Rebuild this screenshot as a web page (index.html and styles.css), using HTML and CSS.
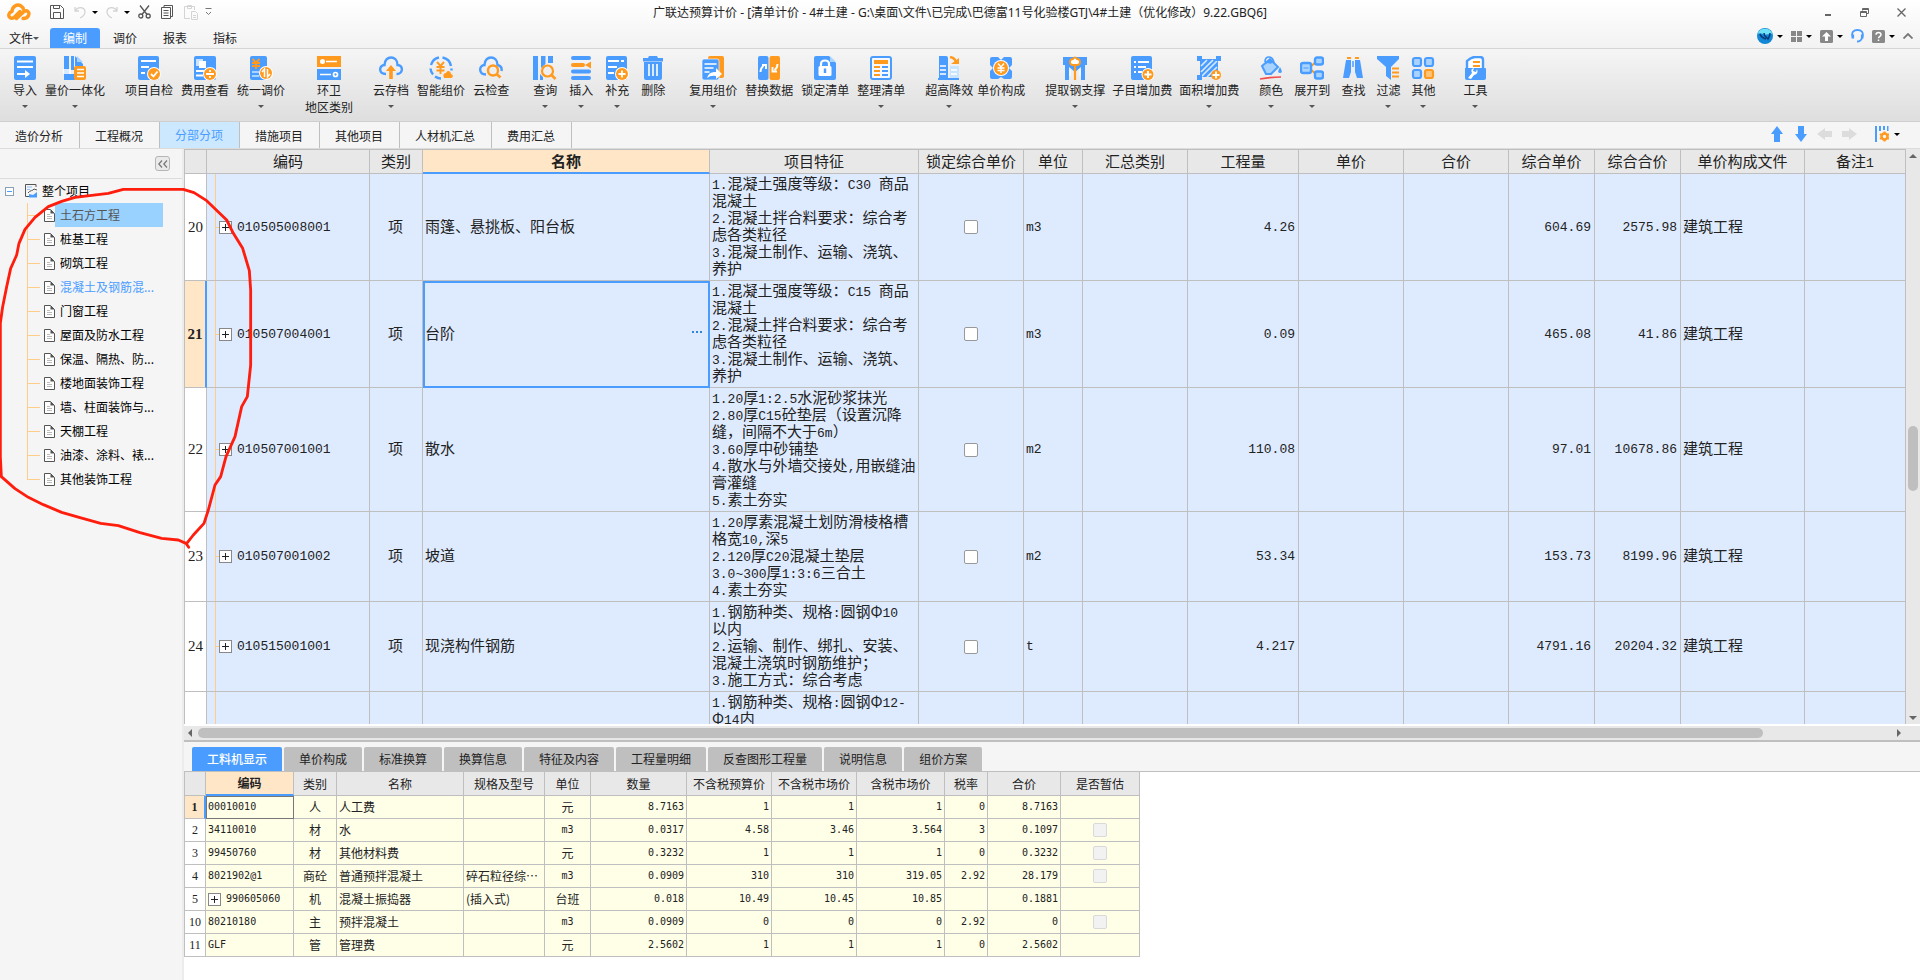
FILE: index.html
```html
<!DOCTYPE html>
<html lang="zh-CN">
<head>
<meta charset="utf-8">
<title>广联达预算计价</title>
<link rel="stylesheet" href="styles.css">
</head>
<body>
<div class="app">
<header class="top">
  <div class="titlebar">
    <div class="quick">
      <svg class="logo" width="24" height="18" viewBox="0 0 24 18" fill="none" stroke="#ff9a1f" stroke-width="3.4" stroke-linecap="round" stroke-linejoin="round"><path d="M9.5 15.500 17 8.500c3-2 6 .5 4.500 4-1 2.500-3.500 3-5.500 3M13 8.500 7 14.500c-3 2-6-.5-5-3.500.6-1.800 2-2.300 3-2.500C5 3.500 10 .5 14 3c1.500 1 2.300 2.200 2.500 3.500"/></svg>
      <button aria-label="保存"><svg width="14" height="14" viewBox="0 0 14 14" fill="none" stroke="#555"><path d="M.5.5h10l3 3v10H.5zM3.500.5v3h6v-3M3.500 13.500v-6h7v6"/></svg></button>
      <button class="b-undo" aria-label="撤销"><svg width="12" height="14" viewBox="0 0 12 14" fill="none" stroke="#d4d4d4" stroke-width="1.300"><path d="M1 2v4h4M1 6c3-5 10-4 10 1 0 3-3 5-5 6"/></svg></button><i class="caret dark"></i>
      <button class="b-redo" aria-label="重做"><svg width="12" height="14" viewBox="0 0 12 14" fill="none" stroke="#d4d4d4" stroke-width="1.300"><path d="M11 2v4H7M11 6C8 1 1 2 1 7c0 3 3 5 5 6"/></svg></button><i class="caret dark"></i>
      <button class="b-cut" aria-label="剪切"><svg width="13" height="14" viewBox="0 0 13 14" fill="none" stroke="#555" stroke-width="1.300"><path d="M2 .5 9 9.500M11 .5 4 9.500"/><circle cx="2.800" cy="11" r="2"/><circle cx="10.200" cy="11" r="2"/></svg></button>
      <button class="b-copy" aria-label="复制"><svg width="12" height="14" viewBox="0 0 12 14" fill="none" stroke="#555"><path d="M3 2.500V.5h8.500v11H9.500M.5 2.500h9v11h-9zM2.500 5.500h5M2.500 8h5M2.500 10.500h5"/></svg></button>
      <button class="b-paste" aria-label="粘贴"><svg width="14" height="15" viewBox="0 0 14 15" fill="none" stroke="#d4d4d4"><path d="M6 13.500H.5v-12h10V5M3.500.5h4v3h-4zM7.500 6.500h4l2 2v6h-6zM9 10.500h3M9 12.500h3"/></svg></button>
      <button class="b-more" aria-label="更多"><svg width="7" height="8" viewBox="0 0 7 8" fill="none" stroke="#777"><path d="M.5.5h6M1 4l2.500 2.500L6 4"/></svg></button>
    </div>
    <div class="title">广联达预算计价 - [清单计价 - 4#土建 - G:\桌面\文件\已完成\巴德富11号化验楼GTJ\4#土建（优化修改）9.22.GBQ6]</div>
    <div class="winbtns">
      <button aria-label="最小化"><svg width="8" height="8" viewBox="0 0 8 8"><path d="M1 6h6v2H1z" fill="#666"/></svg></button>
      <button aria-label="还原"><svg width="9" height="9" viewBox="0 0 9 9" fill="none" stroke="#666"><path d="M2.500 2.500v-2h6v5h-2M.5 3.500h6v5h-6zM.5 4.500h6M2.500 1.500h6"/></svg></button>
      <button aria-label="关闭"><svg width="9" height="9" viewBox="0 0 9 9" stroke="#666" stroke-width="1.300"><path d="M.5.5l8 8M8.500.5l-8 8"/></svg></button>
    </div>
  </div>
  <div class="menubar">
    <nav class="menu"><a href="#" class="file">文件<i class="caret"></i></a><a href="#" class="on">编制</a><a href="#">调价</a><a href="#">报表</a><a href="#">指标</a></nav>
    <div class="tools">
      <button aria-label="浏览器"><svg width="16" height="16" viewBox="0 0 16 16"><circle cx="8" cy="8" r="8" fill="#1287d6"/><path d="M.5 6A8 8 0 0 1 15.500 6C12 5 9 8 6 6 4 5 2 5 .5 6z" fill="#6fe3f5"/><path d="M3 6c1 4 4 4 6 5M7 5c0 4 3 4 4 6 1-2 2-3 2-6" stroke="#083a78" stroke-width="1.500" fill="none"/></svg><i class="caret dark"></i></button>
      <button aria-label="窗口"><svg width="11" height="11" viewBox="0 0 11 11" fill="#888"><path d="M0 0h5v5H0zM6 0h5v5H6zM0 6h5v5H0zM6 6h5v5H6z"/></svg><i class="caret dark"></i></button>
      <button aria-label="上传"><svg width="13" height="13" viewBox="0 0 13 13"><rect width="13" height="13" rx="1.500" fill="#888"/><path d="M6.500 2 11 6.500H8V11H5V6.500H2z" fill="#fff"/></svg><i class="caret dark"></i></button>
      <button aria-label="客服"><svg width="13" height="14" viewBox="0 0 13 14" fill="none" stroke="#4a9dff" stroke-width="1.800"><path d="M1.800 8C-.2 3 3 1 6.500 1s6.700 2 4.700 7M11 9q-1 3.500-5 3.500"/><path d="M1.800 5.500v4M11.200 5.500v4" stroke-width="2.600"/></svg></button>
      <button aria-label="帮助"><svg width="13" height="13" viewBox="0 0 13 13"><rect width="13" height="13" rx="1.500" fill="#888"/><path d="M4 4.800c0-3 5-3 5 0 0 1.700-2.500 1.500-2.500 3.500M6.500 9.500v1.500" stroke="#fff" stroke-width="1.500" fill="none"/></svg><i class="caret dark"></i></button>
      <button aria-label="折叠"><svg width="10" height="6" viewBox="0 0 10 6" fill="none" stroke="#777" stroke-width="1.800"><path d="M.5 5.500 5 1l4.500 4.500"/></svg></button>
    </div>
  </div>
  <div class="ribbon">
    <div class="group">
      <button><svg viewBox="0 0 24 24"><rect x="1" width="22" height="24" rx="2" fill="#4a9dff"/><path d="M4 5.500h16M4 11h16M4 18h8" stroke="#fff" stroke-width="2"/><path d="M12 14l5 4-5 4z" fill="#fff"/></svg>导入<i class="caret"></i></button>
      <button><svg viewBox="0 0 24 24"><path d="M1 0h5v24H1zM8 0h3v14H8zM12 0l8 8v2h-8zM6 18h6v6H6z" fill="#4a9dff"/><path d="M14 0l6 6h-6z" fill="#a8d3ff"/><path d="M0 13h8v5H0z" fill="#fff" opacity=".8"/><rect x="11" y="10" width="12" height="14" rx="2" fill="#ff9a1f"/><path d="M14 13.500h7M14 17h7M14 20.500h7" stroke="#fff" stroke-width="1.500"/></svg>量价一体化<i class="caret"></i></button>
    </div>
    <div class="group">
      <button><svg viewBox="0 0 24 24"><rect x="1" width="21" height="24" rx="2" fill="#4a9dff"/><path d="M4 5h15M4 11h8M4 17h4" stroke="#fff" stroke-width="2"/><circle cx="17" cy="18" r="7" fill="#fff"/><circle cx="17" cy="18" r="6" fill="#ff9a1f"/><path d="M14 18l2.500 2.500 4-5" stroke="#fff" stroke-width="1.800" fill="none"/></svg>项目自检</button>
      <button><svg viewBox="0 0 24 24"><rect x="1" width="22" height="24" rx="2" fill="#4a9dff"/><path d="M3 3h7v7H3z" fill="#c9e4ff"/><path d="M6 5h7v7H6z" fill="#fff"/><path d="M3 15h8M3 19.500h7" stroke="#fff" stroke-width="2"/><circle cx="17" cy="18" r="7" fill="#fff"/><circle cx="17" cy="18" r="6" fill="#ff9a1f"/><path d="M13 18h8M17 14v2M17 20v2" stroke="#fff" stroke-width="1.800"/></svg>费用查看</button>
      <button><svg viewBox="0 0 24 24"><rect x="1" width="17" height="24" rx="2" fill="#4a9dff"/><path d="M3.500 3 7 6.500 10.500 3M3 7h8M3 10h8M7 6v7" stroke="#ff9a1f" stroke-width="1.800" fill="none"/><path d="M3 16h7M3 20h7" stroke="#a8d3ff" stroke-width="2"/><circle cx="17" cy="17" r="7" fill="#fff"/><circle cx="17" cy="17" r="6" fill="#ff9a1f"/><path d="M15.500 21v-8L13 16M18.500 13v8l2.500-3" stroke="#fff" stroke-width="1.500" fill="none"/></svg>统一调价<i class="caret"></i></button>
    </div>
    <div class="group">
      <button><svg viewBox="0 0 24 24"><path d="M0 0h24v11H0z" fill="#ff9a1f"/><path d="M0 13h24v11H0z" fill="#4a9dff"/><path d="M9 5.500h11M3 18.500h11" stroke="#fff" stroke-width="1.600"/><circle cx="5.500" cy="5.500" r="2.500" fill="#fff"/><circle cx="18.500" cy="18.500" r="2" fill="none" stroke="#fff" stroke-width="1.700"/></svg>环卫<span>地区类别</span></button>
    </div>
    <div class="group">
      <button><svg viewBox="0 0 24 24"><path d="M7 18c-8 0-7-9-1.500-9 0-10 13-10 13 0 6 0 6 9-1 9" fill="none" stroke="#4a9dff" stroke-width="2.400"/><path d="M12 9l5 6h-3.200v8h-3.600v-8H7z" fill="#ff9a1f"/></svg>云存档<i class="caret"></i></button>
      <button><svg viewBox="0 0 24 24"><path d="M10 1.500A10.500 10.500 0 0 0 2 9M1.500 12.500A10 10 0 0 0 4 18.500M6 20.500q3 2 6 2M13.500 1.500A10.500 10.500 0 0 1 22 10M22.500 12.500v2" fill="none" stroke="#4a9dff" stroke-width="2.400"/><path d="M8 6l3.500 4L15 6M7.500 11h8M7.500 14.500h8M11.500 10v8" stroke="#ff9a1f" stroke-width="1.900" fill="none"/><path d="M15 22c-2-5 2-5 2-5 2-4 5-1 5 1 3 1 2 4 0 4z" fill="#ff9a1f"/></svg>智能组价</button>
      <button><svg viewBox="0 0 24 24"><path d="M7 18.500c-8 0-7-9.500-1.500-9.500 0-10 13-10 13 0q5 1 4 6" fill="none" stroke="#4a9dff" stroke-width="2.400"/><circle cx="14" cy="14.500" r="5" fill="none" stroke="#ff9a1f" stroke-width="2.400"/><path d="M17.500 18l4 3.500" stroke="#ff9a1f" stroke-width="2.600"/></svg>云检查</button>
    </div>
    <div class="group narrow">
      <button><svg viewBox="0 0 24 24"><path d="M0 0h5v24H0zM8 0h4.500v8L8 12zM15 0h5v7h-5zM7 18l3 3v3H7z" fill="#4a9dff"/><circle cx="14.500" cy="15" r="5.500" fill="#eee" stroke="#ff9a1f" stroke-width="2.200"/><path d="M18.500 19l4 4" stroke="#ff9a1f" stroke-width="2.500"/></svg>查询<i class="caret"></i></button>
      <button><svg viewBox="0 0 24 24"><path d="M4 2h16M4 15.500h16M4 22h16" stroke="#4a9dff" stroke-width="4" stroke-linecap="round"/><path d="M4 9h10" stroke="#ff9a1f" stroke-width="4" stroke-linecap="round"/><path d="M22 5.500v7L16 9z" fill="#ff9a1f"/></svg>插入<i class="caret"></i></button>
      <button><svg viewBox="0 0 24 24"><rect x="1" width="21" height="24" rx="2" fill="#4a9dff"/><path d="M3 5h11M16 5h3M3 11h9M3 17h6" stroke="#fff" stroke-width="2"/><circle cx="17" cy="18" r="7" fill="#fff"/><circle cx="17" cy="18" r="6" fill="#ff9a1f"/><path d="M13.500 18h7M17 14.500v7" stroke="#fff" stroke-width="1.800"/></svg>补充<i class="caret"></i></button>
      <button><svg viewBox="0 0 24 24"><path d="M8 0h8l1 2h5v3.500H2V2h5zM3 6h18v16q0 2-2 2H5q-2 0-2-2z" fill="#4a9dff"/><path d="M8 8v12M12 8v12M16 8v12" stroke="#fff" stroke-width="1.600"/></svg>删除</button>
    </div>
    <div class="group">
      <button><svg viewBox="0 0 24 24"><rect x="7" width="16" height="22" rx="2" fill="#ff9a1f"/><rect x="1" y="3" width="17" height="21" rx="2" fill="#4a9dff" stroke="#fff" stroke-width=".6"/><path d="M3.500 8h12M3.500 12h9M3.500 16h5" stroke="#fff" stroke-width="1.700"/><path d="M6 22q2-7 9-6v-4l6 6-6 5v-3q-5-1-9 2z" fill="#fff"/></svg>复用组价<i class="caret"></i></button>
      <button><svg viewBox="0 0 24 24"><rect x="1" width="10.500" height="24" rx="2" fill="#4a9dff"/><rect x="12.500" width="10.500" height="24" rx="2" fill="#ff9a1f"/><path d="M3.500 16q0-4 3-6M5 9h4v4M20.500 8q0 4-3 6M15.500 11v4.500H20" stroke="#fff" stroke-width="1.900" fill="none"/></svg>替换数据</button>
      <button><svg viewBox="0 0 24 24"><path d="M3 0h13l7 7v15q0 2-2 2H3q-2 0-2-2V2q0-2 2-2z" fill="#4a9dff"/><path d="M17 0l6 6h-6z" fill="#a8d3ff"/><path d="M8 11V8q0-3.500 4-3.500T16 8v3" fill="none" stroke="#fff" stroke-width="2.200"/><rect x="5.500" y="10" width="13" height="10" rx="1.500" fill="#fff"/><path d="M12 12.500v4.500" stroke="#4a9dff" stroke-width="2.400"/></svg>锁定清单</button>
      <button><svg viewBox="0 0 24 24"><rect x="2" y="1" width="20" height="22" rx="2" fill="#f5f9ff" stroke="#4a9dff" stroke-width="2"/><path d="M5 6h14" stroke="#ff9a1f" stroke-width="4"/><path d="M5 11h6M5 15h6M5 19h6" stroke="#ff9a1f" stroke-width="1.800"/><path d="M13 11h6M13 15h6M13 19h6" stroke="#4a9dff" stroke-width="1.800"/></svg>整理清单<i class="caret"></i></button>
    </div>
    <div class="group tight">
      <button><svg viewBox="0 0 24 24"><path d="M2 0h7q2 0 2 2v22H2z" fill="#4a9dff"/><path d="M13 10h9v12h-9z" fill="#c9e4ff"/><path d="M3 10h6M3 14h6M3 18h6M14 14h6M14 18h6" stroke="#fff" stroke-width="1.700"/><path d="M1 23h21" stroke="#4a9dff" stroke-width="2"/><path d="M13 1q5 1 6 5" stroke="#ff9a1f" stroke-width="2.500" fill="none"/><path d="M14 8h8V2z" fill="#ff9a1f"/></svg>超高降效<i class="caret"></i></button>
      <button><svg viewBox="0 0 24 24"><path d="M3 1h6l3 3 3-3h6q2 0 2 2v6l-3 3 3 3v6q0 2-2 2h-6l-3-2-3 2H3q-2 0-2-2v-6l3-3-3-3V3q0-2 2-2z" fill="#4a9dff"/><circle cx="12" cy="12" r="8" fill="#fff"/><circle cx="12" cy="12" r="7" fill="#ff9a1f"/><path d="M9 7.500l3 3.500 3-3.500M8.500 12h7M8.500 14.500h7M12 11v6" stroke="#fff" stroke-width="1.400" fill="none"/></svg>单价构成</button>
    </div>
    <div class="group snug">
      <button><svg viewBox="0 0 24 24"><path d="M0 1h24v8h-2v15h-4V11l-6 5-6-5v13H2V9H0z" fill="#4a9dff"/><path d="M7 20V14M17 20V14" stroke="#fff"/><path d="M12 9v15" stroke="#ff9a1f" stroke-width="2.200"/><path d="M7 6q0-3 3-3 2-3 4 0 3 0 3 3t-3 3h-4Q7 9 7 6z" fill="#fff" stroke="#ff9a1f" stroke-width="1.800"/></svg>提取钢支撑<i class="caret"></i></button>
      <button><svg viewBox="0 0 24 24"><rect x="1" width="21" height="24" rx="2" fill="#4a9dff"/><path d="M8 6h11M8 11h8M8 16h4M4 6h2M4 11h2M4 16h2" stroke="#fff" stroke-width="1.900"/><circle cx="18" cy="18.500" r="6.500" fill="#fff"/><circle cx="18" cy="18.500" r="5.500" fill="#ff9a1f"/><path d="M14.500 18.500h7M18 15v7" stroke="#fff" stroke-width="2"/></svg>子目增加费</button>
      <button><svg viewBox="0 0 24 24"><path d="M3 3h18v18H3z" fill="#4a9dff"/><path d="M4 10l6-6M4 16 16 4M4 21 20 5M10 21 20 11" stroke="#d5eaff" stroke-width="1.700"/><path d="M0 0h5v5H0zM19 0h5v5h-5zM0 19h5v5H0z" fill="#4a9dff"/><circle cx="19" cy="19" r="5" fill="#ff9a1f"/><path d="M15.500 19h7M19 15.500v7" stroke="#fff" stroke-width="1.800"/></svg>面积增加费<i class="caret"></i></button>
    </div>
    <div class="group loose">
      <button><svg viewBox="0 0 24 24"><path d="M3 10 11 3l8 8-7 7H7z" fill="#a8d3ff" stroke="#4a9dff" stroke-width="2"/><path d="M6 6q0-5 4-5t5 6" stroke="#4a9dff" stroke-width="1.700" fill="none"/><path d="M4 9 11 3l3 3q-2 3-5 1z" fill="#4a9dff"/><path d="M21 11q3.500 6 0 6t0-6z" fill="#4a9dff"/><path d="M1 23q10-2 21-2" stroke="#f44c4c" stroke-width="1.700" fill="none"/></svg>颜色<i class="caret"></i></button>
      <button><svg viewBox="0 0 24 24"><path d="M9 12 17 5M9 12l8 7" stroke="#ff9a1f" stroke-width="2"/><rect x="1" y="7" width="10" height="10" rx="2" fill="#a8d3ff" stroke="#4a9dff" stroke-width="2.400"/><rect x="15" y="1.500" width="8" height="7" rx="2" fill="#a8d3ff" stroke="#4a9dff" stroke-width="2.400"/><rect x="15" y="15.500" width="8" height="7" rx="2" fill="#a8d3ff" stroke="#4a9dff" stroke-width="2.400"/><path d="M3.500 12h5" stroke="#4a9dff"/></svg>展开到<i class="caret"></i></button>
      <button><svg viewBox="0 0 24 24"><path d="M5 4h5v12l-2 6H2zM14 4h5l3 18h-6l-2-6z" fill="#4a9dff"/><path d="M6 2h4M14 2h4" stroke="#ff9a1f" stroke-width="2"/><path d="M12 5v6" stroke="#4a9dff" stroke-width="1.500"/></svg>查找</button>
      <button><svg viewBox="0 0 24 24"><path d="M1 0h22v3l-8 8v13l-5-4v-9L1 3z" fill="#4a9dff"/><path d="M16 12.500h7M16 16.500h7M16 20.500h7" stroke="#ff9a1f" stroke-width="2"/></svg>过滤<i class="caret"></i></button>
      <button><svg viewBox="0 0 24 24" fill="#a8d3ff" stroke="#4a9dff" stroke-width="2.200"><rect x="2" y="2" width="8" height="8" rx="2"/><rect x="14" y="2" width="8" height="8" rx="2"/><rect x="2" y="14" width="8" height="8" rx="2"/><rect x="14" y="14" width="8" height="8" rx="2" fill="#ffc47a" stroke="#ff9a1f"/></svg>其他<i class="caret"></i></button>
    </div>
    <div class="group last">
      <button><svg viewBox="0 0 24 24"><path d="M4 14V5q4-4 8-4h5q3 0 3 3v10" fill="#fff" stroke="#4a9dff" stroke-width="2.400"/><path d="M10 6h7M10 10h7" stroke="#ff9a1f" stroke-width="2"/><path d="M2 12h20q1 0 1 1v9q0 2-2 2H4q-2 0-2-2z" fill="#4a9dff"/><path d="M5 22l4-5q-2-4 2-5l-1 3 3 1 1-3q2 5-3 6l-3 4z" fill="#fff"/></svg>工具<i class="caret"></i></button>
    </div>
  </div>
</header>
<div class="navbar">
  <nav class="navtabs"><a href="#">造价分析</a><a href="#">工程概况</a><a href="#" class="on">分部分项</a><a href="#">措施项目</a><a href="#">其他项目</a><a href="#">人材机汇总</a><a href="#">费用汇总</a></nav>
  <div class="navtools">
    <button aria-label="上移"><svg width="16" height="16" viewBox="0 0 16 16" fill="#4a9dff"><path d="M8 0l6 8h-3v8H5V8H2z"/></svg></button>
    <button aria-label="下移"><svg width="16" height="16" viewBox="0 0 16 16" fill="#4a9dff"><path d="M8 16l6-8h-3V0H5v8H2z"/></svg></button>
    <button aria-label="升级"><svg width="16" height="16" viewBox="0 0 16 16" fill="#dcdcdc"><path d="M0 8l8-6v3h7v6H8v3z"/></svg></button>
    <button aria-label="降级"><svg width="16" height="16" viewBox="0 0 16 16" fill="#dcdcdc"><path d="M16 8 8 2v3H1v6h7v3z"/></svg></button>
    <button class="cfg" aria-label="列设置"><svg width="14" height="16" viewBox="0 0 14 16"><path d="M0 0h2v16H0zM4 0h2v5H4zM8 0h2v4H8zM12 0h1.500v5H12z" fill="#4a9dff"/><circle cx="9.500" cy="10.500" r="3" fill="none" stroke="#ff9a1f" stroke-width="2.600"/><path d="M9.500 5.500v2M9.500 13.500v2M5 8l1.500 1M12.500 12l1.500 1M14 8l-1.500 1M6.500 12 5 13" stroke="#ff9a1f" stroke-width="2"/></svg><i class="caret dark"></i></button>
  </div>
</div>
<main class="main">
  <aside class="side">
    <div class="sidehead"><button aria-label="收起"><svg width="10" height="8" viewBox="0 0 10 8" fill="none" stroke="#777" stroke-width="1.200"><path d="M4 .5.8 4 4 7.500M9 .5 5.800 4 9 7.500"/></svg></button></div>
    <div class="root"><button class="minus" aria-label="折叠整个项目"></button><svg width="14" height="14" viewBox="0 0 14 14" fill="none"><path d="M12 3V.5H1.500v12H5" stroke="#555"/><path d="M3 3h5M3 5.500h3" stroke="#8cc4ff"/><path d="M4 9c2-3 5-2 6-4l3 1" stroke="#555"/><path d="M5 13.500V10l4 1 4-3v5.500z" fill="#4a9dff"/></svg>整个项目</div>
    <ul class="tree">
      <li class="sel"><svg><use href="#doc"/></svg><a href="#">土石方工程</a></li>
      <li><svg><use href="#doc"/></svg><a href="#">桩基工程</a></li>
      <li><svg><use href="#doc"/></svg><a href="#">砌筑工程</a></li>
      <li class="cur"><svg><use href="#doc"/></svg><a href="#">混凝土及钢筋混...</a></li>
      <li><svg><use href="#doc"/></svg><a href="#">门窗工程</a></li>
      <li><svg><use href="#doc"/></svg><a href="#">屋面及防水工程</a></li>
      <li><svg><use href="#doc"/></svg><a href="#">保温、隔热、防...</a></li>
      <li><svg><use href="#doc"/></svg><a href="#">楼地面装饰工程</a></li>
      <li><svg><use href="#doc"/></svg><a href="#">墙、柱面装饰与...</a></li>
      <li><svg><use href="#doc"/></svg><a href="#">天棚工程</a></li>
      <li><svg><use href="#doc"/></svg><a href="#">油漆、涂料、裱...</a></li>
      <li><svg><use href="#doc"/></svg><a href="#">其他装饰工程</a></li>
    </ul>
  </aside>
  <section class="work">
    <div class="upper">
      <div class="view">
        <table class="grid">
          <colgroup><col class="w22"><col class="w163"><col class="w53"><col><col class="w209"><col class="w105"><col class="w59"><col class="w105"><col class="w111"><col class="w105"><col class="w105"><col class="w86"><col class="w86"><col class="w124"><col class="w101"></colgroup>
          <thead><tr><th></th><th>编码</th><th>类别</th><th class="hot">名称</th><th>项目特征</th><th>锁定综合单价</th><th>单位</th><th>汇总类别</th><th>工程量</th><th>单价</th><th>合价</th><th>综合单价</th><th>综合合价</th><th>单价构成文件</th><th>备注<span class="n">1</span></th></tr></thead>
          <tbody>
            <tr><th>20</th><td class="code"><div><button class="plus" aria-label="展开"></button>010505008001</div></td><td class="c">项</td><td>雨篷、悬挑板、阳台板</td><td class="feat"><span class="n">1.</span>混凝土强度等级：<span class="n">C30 </span>商品<br>混凝土<br><span class="n">2.</span>混凝土拌合料要求：综合考<br>虑各类粒径<br><span class="n">3.</span>混凝土制作、运输、浇筑、<br>养护</td><td class="k"><input type="checkbox" aria-label="锁定综合单价"></td><td class="u">m3</td><td></td><td class="r">4.26</td><td></td><td></td><td class="r">604.69</td><td class="r">2575.98</td><td>建筑工程</td><td></td></tr>
            <tr class="act"><th>21</th><td class="code"><div><button class="plus" aria-label="展开"></button>010507004001</div></td><td class="c">项</td><td class="focus"><div><span>台阶</span><button class="dots" aria-label="更多"><svg width="10" height="2" viewBox="0 0 10 2" fill="#2f86d8"><path d="M0 0h2v2H0zM4 0h2v2H4zM8 0h2v2H8z"/></svg></button></div></td><td class="feat"><span class="n">1.</span>混凝土强度等级：<span class="n">C15 </span>商品<br>混凝土<br><span class="n">2.</span>混凝土拌合料要求：综合考<br>虑各类粒径<br><span class="n">3.</span>混凝土制作、运输、浇筑、<br>养护</td><td class="k"><input type="checkbox" aria-label="锁定综合单价"></td><td class="u">m3</td><td></td><td class="r">0.09</td><td></td><td></td><td class="r">465.08</td><td class="r">41.86</td><td>建筑工程</td><td></td></tr>
            <tr><th>22</th><td class="code"><div><button class="plus" aria-label="展开"></button>010507001001</div></td><td class="c">项</td><td>散水</td><td class="feat"><span class="n">1.20</span>厚<span class="n">1:2.5</span>水泥砂浆抹光<br><span class="n">2.80</span>厚<span class="n">C15</span>砼垫层（设置沉降<br>缝，间隔不大于<span class="n">6m</span>）<br><span class="n">3.60</span>厚中砂铺垫<br><span class="n">4.</span>散水与外墙交接处<span class="n">,</span>用嵌缝油<br>膏灌缝<br><span class="n">5.</span>素土夯实</td><td class="k"><input type="checkbox" aria-label="锁定综合单价"></td><td class="u">m2</td><td></td><td class="r">110.08</td><td></td><td></td><td class="r">97.01</td><td class="r">10678.86</td><td>建筑工程</td><td></td></tr>
            <tr><th>23</th><td class="code"><div><button class="plus" aria-label="展开"></button>010507001002</div></td><td class="c">项</td><td>坡道</td><td class="feat"><span class="n">1.20</span>厚素混凝土划防滑棱格槽<br>格宽<span class="n">10,</span>深<span class="n">5</span><br><span class="n">2.120</span>厚<span class="n">C20</span>混凝土垫层<br><span class="n">3.0~300</span>厚<span class="n">1:3:6</span>三合土<br><span class="n">4.</span>素土夯实</td><td class="k"><input type="checkbox" aria-label="锁定综合单价"></td><td class="u">m2</td><td></td><td class="r">53.34</td><td></td><td></td><td class="r">153.73</td><td class="r">8199.96</td><td>建筑工程</td><td></td></tr>
            <tr><th>24</th><td class="code"><div><button class="plus" aria-label="展开"></button>010515001001</div></td><td class="c">项</td><td>现浇构件钢筋</td><td class="feat"><span class="n">1.</span>钢筋种类、规格<span class="n">:</span>圆钢Φ<span class="n">10</span><br>以内<br><span class="n">2.</span>运输、制作、绑扎、安装、<br>混凝土浇筑时钢筋维护；<br><span class="n">3.</span>施工方式：综合考虑</td><td class="k"><input type="checkbox" aria-label="锁定综合单价"></td><td class="u">t</td><td></td><td class="r">4.217</td><td></td><td></td><td class="r">4791.16</td><td class="r">20204.32</td><td>建筑工程</td><td></td></tr>
            <tr class="tail"><th></th><td class="code"></td><td></td><td></td><td class="feat"><span class="n">1.</span>钢筋种类、规格<span class="n">:</span>圆钢Φ<span class="n">12-</span><br>Φ<span class="n">14</span>内</td><td></td><td></td><td></td><td></td><td></td><td></td><td></td><td></td><td></td><td></td></tr>
          </tbody>
        </table>
      </div>
      <div class="vbar"><i class="ar up"></i><div class="vtrack"><div class="vthumb"></div></div><i class="ar down"></i></div>
    </div>
    <div class="hbar"><i class="ar left"></i><div class="hthumb"></div><i class="ar right"></i></div>
    <div class="lower">
      <div class="subtabs"><button class="on">工料机显示</button><button>单价构成</button><button>标准换算</button><button>换算信息</button><button>特征及内容</button><button>工程量明细</button><button>反查图形工程量</button><button>说明信息</button><button>组价方案</button></div>
      <table class="sub">
        <colgroup><col class="s21"><col class="s88"><col class="s43"><col class="s127"><col class="s81"><col class="s46"><col class="s96"><col class="s85"><col class="s85"><col class="s88"><col class="s43"><col class="s73"><col class="s79"></colgroup>
        <thead><tr><th></th><th class="hot">编码</th><th>类别</th><th>名称</th><th>规格及型号</th><th>单位</th><th>数量</th><th>不含税预算价</th><th>不含税市场价</th><th>含税市场价</th><th>税率</th><th>合价</th><th>是否暂估</th></tr></thead>
        <tbody>
          <tr class="act"><th>1</th><td class="m focus">00010010</td><td class="c">人</td><td>人工费</td><td></td><td class="c">元</td><td class="r">8.7163</td><td class="r">1</td><td class="r">1</td><td class="r">1</td><td class="r">0</td><td class="r">8.7163</td><td></td></tr>
          <tr><th>2</th><td class="m">34110010</td><td class="c">材</td><td>水</td><td></td><td class="c m">m3</td><td class="r">0.0317</td><td class="r">4.58</td><td class="r">3.46</td><td class="r">3.564</td><td class="r">3</td><td class="r">0.1097</td><td class="c"><input type="checkbox" disabled aria-label="是否暂估"></td></tr>
          <tr><th>3</th><td class="m">99450760</td><td class="c">材</td><td>其他材料费</td><td></td><td class="c">元</td><td class="r">0.3232</td><td class="r">1</td><td class="r">1</td><td class="r">1</td><td class="r">0</td><td class="r">0.3232</td><td class="c"><input type="checkbox" disabled aria-label="是否暂估"></td></tr>
          <tr><th>4</th><td class="m">8021902@1</td><td class="c">商砼</td><td>普通预拌混凝土</td><td>碎石粒径综⋯</td><td class="c m">m3</td><td class="r">0.0909</td><td class="r">310</td><td class="r">310</td><td class="r">319.05</td><td class="r">2.92</td><td class="r">28.179</td><td class="c"><input type="checkbox" disabled aria-label="是否暂估"></td></tr>
          <tr><th>5</th><td class="m"><div class="exp"><button class="plus" aria-label="展开"></button>990605060</div></td><td class="c">机</td><td>混凝土振捣器</td><td>(插入式)</td><td class="c">台班</td><td class="r">0.018</td><td class="r">10.49</td><td class="r">10.45</td><td class="r">10.85</td><td></td><td class="r">0.1881</td><td></td></tr>
          <tr><th>10</th><td class="m">80210180</td><td class="c">主</td><td>预拌混凝土</td><td></td><td class="c m">m3</td><td class="r">0.0909</td><td class="r">0</td><td class="r">0</td><td class="r">0</td><td class="r">2.92</td><td class="r">0</td><td class="c"><input type="checkbox" disabled aria-label="是否暂估"></td></tr>
          <tr><th>11</th><td class="m">GLF</td><td class="c">管</td><td>管理费</td><td></td><td class="c">元</td><td class="r">2.5602</td><td class="r">1</td><td class="r">1</td><td class="r">1</td><td class="r">0</td><td class="r">2.5602</td><td></td></tr>
        </tbody>
      </table>
    </div>
  </section>
</main>
<svg class="mark" width="260" height="560" viewBox="0 0 780 1680" fill="none" stroke="#ff1d0d" stroke-width="8.500" stroke-linejoin="round" stroke-linecap="round"><path d="M566 1642 558 1630 535 1620 485 1615 420 1598 355 1577 302 1570 240 1553 185 1537 130 1514 85 1492 45 1466 4 1430 1 1370V970L8 920 20 860 32 805 38 792 50 765 57 730 75 688 105 652 145 620 185 604 225 592 325 580 370 568H550L582 578 620 602 680 660 700 700 728 745 748 812 752 870V1095L742 1190 725 1220 705 1310 678 1370 662 1430 645 1455 625 1530 612 1570 580 1605 562 1628"/></svg>
<svg class="defs" aria-hidden="true"><symbol id="doc" viewBox="0 0 11 13"><path d="M.5.500h6l4 4v8H.5z" fill="#fff" stroke="#555"/><path d="M6.500.500l4 4h-4z" fill="#555"/><path d="M3 5.500h3M3 7.500h5M3 9.500h5" stroke="#bbb"/></symbol></svg>
</div>
</body>
</html>
```
FILE: styles.css
```css
* { box-sizing: border-box; }
body { margin: 0; font: 12px/16px "Noto Sans CJK SC", sans-serif; color: #222; background: #fff; }
button { font: inherit; color: inherit; background: none; border: 0; padding: 0; margin: 0; }
a { color: inherit; text-decoration: none; }
svg { display: block; flex: none; }
.defs { display: none; }
.app { height: 100vh; display: flex; flex-direction: column; overflow: hidden; position: relative; }

.caret { display: block; border: 3px solid transparent; border-top: 3px solid #555; border-bottom: 0; width: 0; flex: none; }
.caret.dark { border-top-color: #000; }

/* title and menu */
.top { flex: none; background: linear-gradient(#fff, #f2f2f2 49px); }
.titlebar { height: 28px; display: grid; grid-template-columns: 1fr auto 1fr; align-items: start; }
.quick { display: flex; align-items: center; height: 24px; padding-left: 7px; }
.quick .logo { margin-right: 19px; }
.b-undo { margin: 0 6px 0 10px; }
.b-redo { margin: 0 6px 0 8px; }
.b-cut { margin-left: 8px; }
.b-copy { margin-left: 10px; }
.b-paste { margin-left: 11px; }
.b-more { margin-left: 7px; }
.title { font-family: "Noto Sans", "Noto Sans CJK SC", sans-serif; line-height: 26px; white-space: nowrap; }
.winbtns { display: flex; justify-content: flex-end; align-items: center; gap: 28px; height: 24px; padding-right: 14px; }
.menubar { height: 21px; display: flex; justify-content: space-between; border-bottom: 1px solid #d5d5d5; }
.menu { display: flex; }
.menu a { width: 50px; text-align: center; line-height: 20px; }
.menu .file { display: flex; align-items: center; padding-left: 9px; }
.menu .on { background: #4a9dff; color: #fff; border-radius: 3px 3px 0 0; }
.tools { display: flex; align-items: center; gap: 8px; padding: 0 7px 4px 0; }
.tools button { display: flex; align-items: center; gap: 4px; }

/* ribbon */
.ribbon { height: 73px; display: flex; gap: 20px; padding: 7px 0 0 13px; background: linear-gradient(#f5f5f5, #dedede); border-bottom: 1px solid #cfcfcf; }
.group { display: flex; align-items: flex-start; gap: 8px; }
.group button { display: flex; flex-direction: column; align-items: center; line-height: 17px; white-space: nowrap; }
.group button svg { width: 24px; height: 24px; margin-bottom: 1px; }
.group .caret { margin-top: 7px; }
.narrow { gap: 12px; padding: 0 4px; }
.tight { gap: 4px; }
.snug { gap: 7px; }
.loose { gap: 11px; }
.last { padding-left: 8px; }

/* page tabs */
.navbar { flex: none; height: 27px; display: flex; justify-content: space-between; background: #f5f5f5; border-bottom: 1px solid #dcdcdc; }
.navtabs { display: flex; }
.navtabs a { padding: 0 16px 0 15px; line-height: 28px; border-right: 1px solid #bfbfbf; }
.navtabs .on { background: #cce8ff; color: #4a9dff; line-height: 26px; }
.navtools { display: flex; align-items: center; gap: 8px; padding: 0 20px 2px 0; }
.navtools .cfg { display: flex; align-items: center; gap: 5px; margin-left: 10px; }

/* sidebar */
.main { flex: 1; min-height: 0; display: flex; }
.side { flex: none; width: 184px; background: #f5f5f5; border-right: 2px solid #ececec; }
.sidehead { height: 30px; display: flex; justify-content: flex-end; align-items: center; padding-right: 12px; border-bottom: 1px solid #dcdcdc; }
.sidehead button { width: 15px; height: 15px; display: grid; place-items: center; border: 1px solid #b5b5b5; border-radius: 3px; background: #eaeaea; }
.root { height: 24px; display: flex; align-items: center; gap: 4px; padding-left: 5px; line-height: 24px; color: #000; }
.root svg { margin-left: 6px; }
.minus { width: 9px; height: 9px; border: 1px solid #8aa0b5; background: linear-gradient(#4a9dff, #4a9dff) center / 5px 1px no-repeat #fff; }
.tree { list-style: none; margin: 0; padding: 0 19px 0 27px; color: #000; }
.tree li { display: flex; align-items: center; height: 24px; padding-left: 17px; background: linear-gradient(#ffcc8a, #ffcc8a) 0 0 / 1px 24px no-repeat, linear-gradient(#ffcc8a, #ffcc8a) 0 12px / 13px 1px no-repeat; }
.tree li:last-child { background-size: 1px 12px, 13px 1px; }
.tree svg { width: 11px; height: 13px; }
.tree a { flex: 1; padding-left: 5px; line-height: 24px; white-space: nowrap; }
.tree .sel a { background: #99d1ff; color: #555; }
.tree .cur a { color: #4a9dff; }

/* work area */
.work { flex: 1; min-width: 0; display: flex; flex-direction: column; }
.upper { flex: 1; min-height: 0; display: flex; padding-bottom: 2px; }
.view { flex: 1; min-width: 0; overflow: hidden; border-left: 1px solid #bfbfbf; border-top: 1px solid #bfbfbf; }
table { border-collapse: separate; border-spacing: 0; table-layout: fixed; }
th, td { padding: 0 3px; border: 0 solid #bfbfbf; border-width: 0 1px 1px 0; font-weight: 400; white-space: nowrap; overflow: hidden; }
td { text-align: left; }
thead th { background: #e8e8e8; }
thead .hot { background: #ffe6c7; font-weight: 700; border-bottom: 2px solid #4a9dff; }
tbody th { background: #fff; padding: 0; }
.act th { background: #ffe6c7; font-weight: 700; border-right: 2px solid #4a9dff; }
.c { text-align: center; }
.grid { width: 100%; font-size: 15px; line-height: 17px; }
.grid thead th { height: 24px; padding-bottom: 2px; }
.grid td { background-color: #deebff; padding: 0 3px 4px 2px; }
.n, .u, .grid .r, .code { font-family: "Liberation Mono", "Noto Sans CJK SC", monospace; font-size: 13px; }
.n { white-space: pre; line-height: 8px; }
.grid .u, .grid .r, .grid .code, .grid .k { padding-top: 2px; padding-bottom: 2px; }
.grid tbody th { font-family: "Liberation Serif", serif; }
.feat { vertical-align: top; }
.r { text-align: right; }
.grid .code { padding-left: 8px; background: linear-gradient(#ffcc8a, #ffcc8a) 8px 0 / 1px 100% no-repeat #deebff; }
.code div { display: flex; align-items: center; }
.code div::before { content: ""; width: 4px; height: 1px; background: #ffcc8a; }
.plus { flex: none; width: 13px; height: 13px; margin-right: 5px; border: 1px solid #888; background: linear-gradient(#222, #222) center / 7px 1px no-repeat, linear-gradient(#222, #222) center / 1px 7px no-repeat #fff; }
.grid .focus { outline: 2px solid #4a9dff; outline-offset: -2px; }
.focus div { display: flex; justify-content: space-between; align-items: center; padding-right: 4px; }
.tail { height: 107px; }
input { appearance: none; display: block; width: 14px; height: 14px; margin: 0 auto; border: 1px solid #999; border-radius: 2px; background: #fff; }
input:disabled { border-color: #d9d9d9; background: #f2f2f2; }
.w22 { width: 22px; } .w53 { width: 53px; } .w59 { width: 59px; } .w86 { width: 86px; } .w101 { width: 101px; }
.w105 { width: 105px; } .w111 { width: 111px; } .w124 { width: 124px; } .w163 { width: 163px; } .w209 { width: 209px; }

/* scroll bars */
.vbar { width: 14px; flex: none; display: flex; flex-direction: column; align-items: center; background: #e8e8e8; padding: 5px 0 4px; }
.vtrack { flex: 1; width: 10px; display: flex; flex-direction: column; }
.vtrack::before { content: ""; flex: 267; }
.vtrack::after { content: ""; flex: 225; }
.vthumb { height: 65px; border-radius: 5px; background: #bfbfbf; }
.hbar { flex: none; height: 16px; display: flex; align-items: center; background: #e8e8e8; border-bottom: 2px solid #bfbfbf; padding: 0 19px 0 4px; }
.hthumb { flex: 1; height: 10px; margin: 0 134px 0 6px; border-radius: 5px; background: #bfbfbf; }
.ar { width: 0; height: 0; border: 4px solid transparent; }
.up { border-top: 0; border-bottom-color: #666; }
.down { border-bottom: 0; border-top-color: #666; }
.left { border-left: 0; border-right-color: #666; }
.right { border-right: 0; border-left-color: #666; }

/* lower pane */
.lower { flex: none; height: 238px; background: #fff; }
.subtabs { display: flex; gap: 2px; height: 30px; padding: 5px 0 0 8px; background: #f5f5f5; border-bottom: 1px solid #bfbfbf; }
.subtabs button { padding: 0 15px; line-height: 24px; background: #bfbfbf; border-radius: 2px 2px 0 0; }
.subtabs .on { background: #4a9dff; color: #fff; font-weight: 500; }
.sub { width: 956px; line-height: 18px; border-left: 1px solid #bfbfbf; }
.sub th, .sub td { height: 23px; padding: 0 2px; }
.sub thead th { height: 24px; }
.sub td { background: #ffffe8; }
.sub .r, .sub .m { font-family: "DejaVu Sans Mono", monospace; font-size: 10px; }
.sub tbody th { padding: 0; font-family: "Liberation Serif", serif; }
.sub .focus { outline: 1px solid #777; outline-offset: -1px; }
.exp { display: flex; align-items: center; }
.s21 { width: 21px; } .s43 { width: 43px; } .s46 { width: 46px; } .s73 { width: 73px; } .s79 { width: 79px; } .s81 { width: 81px; }
.s85 { width: 85px; } .s88 { width: 88px; } .s96 { width: 96px; } .s127 { width: 127px; }

.mark { position: absolute; left: 0; top: 0; pointer-events: none; }
```
